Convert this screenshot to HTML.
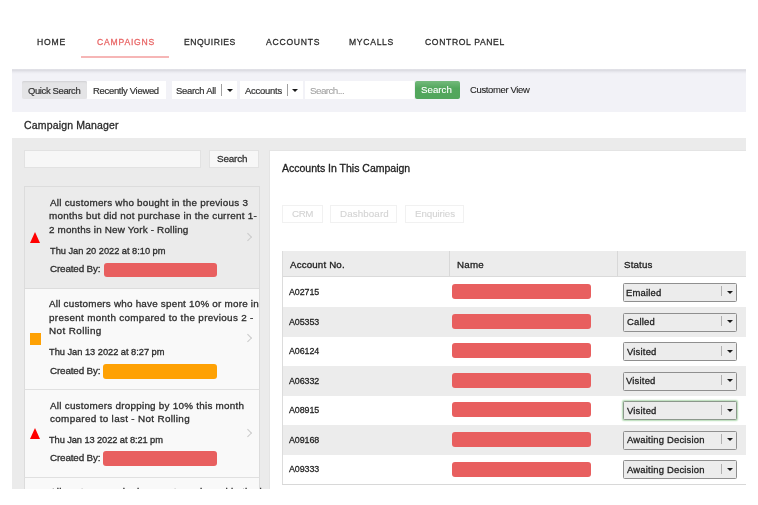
<!DOCTYPE html><html><head><meta charset="utf-8"><style>
*{margin:0;padding:0;box-sizing:border-box}
html,body{width:758px;height:505px;overflow:hidden;background:#fff;font-family:"Liberation Sans",sans-serif;color:#2b2b2b}
.a{position:absolute}
.t{position:absolute;white-space:nowrap;line-height:1;will-change:transform;font-family:"Liberation Sans",sans-serif}
.clip{position:absolute;left:0;top:0;width:758px;height:489px;overflow:hidden}
.sep{position:absolute;width:1px;background:#a0a0a0}
.arr{position:absolute;width:0;height:0;border-left:3px solid transparent;border-right:3px solid transparent;border-top:3.6px solid #1a1a1a}
.tri{position:absolute;width:0;height:0;border-left:5.6px solid transparent;border-right:5.6px solid transparent;border-bottom:11px solid #f00}
.chev{position:absolute;width:5.6px;height:5.6px;border-right:1.6px solid #cbcbcb;border-top:1.6px solid #cbcbcb;transform:rotate(45deg)}
.nm{position:absolute;width:139px;height:15px;background:#e85f5f;border-radius:3px}
.sel{position:absolute;left:623px;width:114px;height:19px;background:#ececec;border:1px solid #8f8f8f;border-radius:1.5px}
</style></head><body><div class="clip">
<div class="t" id="nav_home" style="left:36.50px;top:37.47px;font-size:8.60px;letter-spacing:0.833px;color:#2a2a2a;transform:scaleY(1.15);transform-origin:0 0;-webkit-text-stroke:0.25px #2a2a2a;">HOME</div>
<div class="t" id="nav_camp" style="left:96.60px;top:37.47px;font-size:8.60px;letter-spacing:0.800px;color:#e86565;transform:scaleY(1.15);transform-origin:0 0;-webkit-text-stroke:0.25px #e86565;">CAMPAIGNS</div>
<div class="t" id="nav_enq" style="left:183.70px;top:37.47px;font-size:8.60px;letter-spacing:0.500px;color:#2a2a2a;transform:scaleY(1.15);transform-origin:0 0;-webkit-text-stroke:0.25px #2a2a2a;">ENQUIRIES</div>
<div class="t" id="nav_acc" style="left:266.20px;top:37.47px;font-size:8.60px;letter-spacing:0.757px;color:#2a2a2a;transform:scaleY(1.15);transform-origin:0 0;-webkit-text-stroke:0.25px #2a2a2a;">ACCOUNTS</div>
<div class="t" id="nav_myc" style="left:349.40px;top:37.47px;font-size:8.60px;letter-spacing:0.700px;color:#2a2a2a;transform:scaleY(1.15);transform-origin:0 0;-webkit-text-stroke:0.25px #2a2a2a;">MYCALLS</div>
<div class="t" id="nav_cp" style="left:424.90px;top:37.47px;font-size:8.60px;letter-spacing:0.633px;color:#2a2a2a;transform:scaleY(1.15);transform-origin:0 0;-webkit-text-stroke:0.25px #2a2a2a;">CONTROL PANEL</div>
<div class="a" style="left:81px;top:56px;width:88px;height:2px;background:#f6b6b6"></div>
<div class="a" style="left:12px;top:69px;width:734px;height:42.5px;background:linear-gradient(#e2e2e8 0px,#dddde3 1.5px,#e9e9ef 3px,#f2f2f7 5px)"></div>
<div class="a" style="left:22px;top:81px;width:65px;height:18px;background:#e4e4e6;border-radius:2px;box-shadow:inset 0 2px 2px -1px #d0d0d3"></div>
<div class="a" style="left:87px;top:81px;width:78.5px;height:18px;background:#fff"></div>
<div class="a" style="left:172px;top:81px;width:65px;height:18px;background:#fff"></div>
<div class="sep" style="left:221px;top:84px;height:12px"></div><div class="arr" style="left:226.5px;top:89px"></div>
<div class="a" style="left:240px;top:81px;width:63px;height:18px;background:#fff"></div>
<div class="sep" style="left:286.5px;top:84px;height:12px"></div><div class="arr" style="left:292px;top:89px"></div>
<div class="a" style="left:305px;top:81px;width:108.5px;height:18px;background:#fff"></div>
<div class="a" style="left:415px;top:81px;width:45.3px;height:18.2px;background:linear-gradient(#74ba7c,#53a75d 40%,#52a65c);border-radius:2px"></div>
<div class="t" id="tb_qs" style="left:28.10px;top:85.78px;font-size:9.45px;letter-spacing:-0.364px;color:#333;-webkit-text-stroke:0.2px #333;">Quick Search</div>
<div class="t" id="tb_rv" style="left:93.10px;top:85.78px;font-size:9.45px;letter-spacing:-0.286px;color:#333;-webkit-text-stroke:0.2px #333;">Recently Viewed</div>
<div class="t" id="tb_sa" style="left:175.80px;top:85.78px;font-size:9.45px;letter-spacing:-0.267px;color:#333;-webkit-text-stroke:0.2px #333;">Search All</div>
<div class="t" id="tb_ac" style="left:244.50px;top:85.78px;font-size:9.45px;letter-spacing:-0.229px;color:#333;-webkit-text-stroke:0.2px #333;">Accounts</div>
<div class="t" id="tb_ph" style="left:310.20px;top:85.62px;font-size:9.88px;letter-spacing:-0.600px;color:#a3a3a3;-webkit-text-stroke:0.1px #a3a3a3;">Search...</div>
<div class="t" id="tb_go" style="left:421.30px;top:84.84px;font-size:9.74px;letter-spacing:0.000px;color:#ffffff;-webkit-text-stroke:0.1px #ffffff;">Search</div>
<div class="t" id="tb_cv" style="left:470.20px;top:84.78px;font-size:9.45px;letter-spacing:-0.333px;color:#222;-webkit-text-stroke:0.1px #222;">Customer View</div>
<div class="t" id="cm" style="left:24.10px;top:120.22px;font-size:10.50px;letter-spacing:0.160px;color:#2a2a2a;-webkit-text-stroke:0.3px #2a2a2a;">Campaign Manager</div>
<div class="a" style="left:12px;top:138px;width:734px;height:351px;background:#ebebeb"></div>
<div class="a" style="left:24px;top:150px;width:177px;height:18px;background:#f7f7f7;border:1px solid #e2e2e2"></div>
<div class="a" style="left:209px;top:150px;width:50px;height:18px;background:#f7f7f7;border:1px solid #e2e2e2"></div>
<div class="t" id="ls_btn" style="left:217.40px;top:154.22px;font-size:9.88px;letter-spacing:-0.160px;color:#333;-webkit-text-stroke:0.3px #333;">Search</div>
<div class="a" style="left:24px;top:186px;width:236px;height:103px;background:#ebebeb;border:1px solid #dcdcdc"></div>
<div class="a" style="left:24px;top:289px;width:236px;height:101px;background:#f9f9f9;border-left:1px solid #dcdcdc;border-right:1px solid #dcdcdc;border-bottom:1px solid #e0e0e0"></div>
<div class="a" style="left:24px;top:390px;width:236px;height:88px;background:#f9f9f9;border-left:1px solid #dcdcdc;border-right:1px solid #dcdcdc;border-bottom:1px solid #e0e0e0"></div>
<div class="a" style="left:24px;top:478px;width:236px;height:30px;background:#f9f9f9;border-left:1px solid #dcdcdc;border-right:1px solid #dcdcdc"></div>
<div class="t" id="c1_l1" style="left:50.20px;top:197.62px;font-size:9.88px;letter-spacing:0.234px;color:#2d2d2d;-webkit-text-stroke:0.3px #2d2d2d;">All customers who bought in the previous 3</div>
<div class="t" id="c1_l2" style="left:49.40px;top:211.37px;font-size:9.88px;letter-spacing:0.255px;color:#2d2d2d;-webkit-text-stroke:0.3px #2d2d2d;">months but did not purchase in the current 1-</div>
<div class="t" id="c1_l3" style="left:49.40px;top:225.12px;font-size:9.88px;letter-spacing:0.166px;color:#2d2d2d;-webkit-text-stroke:0.3px #2d2d2d;">2 months in New York - Rolling</div>
<div class="t" id="c1_date" style="left:50.40px;top:246.52px;font-size:9.30px;letter-spacing:-0.032px;color:#2d2d2d;transform:scaleY(1.07);transform-origin:0 0;-webkit-text-stroke:0.3px #2d2d2d;">Thu Jan 20 2022 at 8:10 pm</div>
<div class="t" id="c1_by" style="left:50.40px;top:264.32px;font-size:9.88px;letter-spacing:-0.160px;color:#2d2d2d;-webkit-text-stroke:0.3px #2d2d2d;">Created By:</div>
<div class="t" id="c2_l1" style="left:49.40px;top:299.02px;font-size:9.88px;letter-spacing:0.210px;color:#2d2d2d;-webkit-text-stroke:0.3px #2d2d2d;">All customers who have spent 10% or more in</div>
<div class="t" id="c2_l2" style="left:49.40px;top:312.62px;font-size:9.88px;letter-spacing:0.312px;color:#2d2d2d;-webkit-text-stroke:0.3px #2d2d2d;">present month compared to the previous 2 -</div>
<div class="t" id="c2_l3" style="left:49.40px;top:326.32px;font-size:9.88px;letter-spacing:0.400px;color:#2d2d2d;-webkit-text-stroke:0.3px #2d2d2d;">Not Rolling</div>
<div class="t" id="c2_date" style="left:48.80px;top:348.12px;font-size:9.30px;letter-spacing:-0.032px;color:#2d2d2d;transform:scaleY(1.07);transform-origin:0 0;-webkit-text-stroke:0.3px #2d2d2d;">Thu Jan 13 2022 at 8:27 pm</div>
<div class="t" id="c2_by" style="left:50.40px;top:365.52px;font-size:9.88px;letter-spacing:-0.160px;color:#2d2d2d;-webkit-text-stroke:0.3px #2d2d2d;">Created By:</div>
<div class="t" id="c3_l1" style="left:50.20px;top:400.72px;font-size:9.88px;letter-spacing:0.246px;color:#2d2d2d;-webkit-text-stroke:0.3px #2d2d2d;">All customers dropping by 10% this month</div>
<div class="t" id="c3_l2" style="left:50.20px;top:414.22px;font-size:9.88px;letter-spacing:0.331px;color:#2d2d2d;-webkit-text-stroke:0.3px #2d2d2d;">compared to last - Not Rolling</div>
<div class="t" id="c3_date" style="left:48.80px;top:436.02px;font-size:9.30px;letter-spacing:-0.096px;color:#2d2d2d;transform:scaleY(1.07);transform-origin:0 0;-webkit-text-stroke:0.3px #2d2d2d;">Thu Jan 13 2022 at 8:21 pm</div>
<div class="t" id="c3_by" style="left:50.40px;top:453.42px;font-size:9.88px;letter-spacing:-0.160px;color:#2d2d2d;-webkit-text-stroke:0.3px #2d2d2d;">Created By:</div>
<div class="t" id="c4_l1" style="left:50.20px;top:486.52px;font-size:9.88px;letter-spacing:0.234px;color:#2d2d2d;-webkit-text-stroke:0.3px #2d2d2d;">All customers who have not purchased in the last</div>
<div class="tri" style="left:29.5px;top:232.3px"></div>
<div class="a" style="left:29.5px;top:333.4px;width:11.4px;height:11.2px;background:#fea104"></div>
<div class="tri" style="left:29.5px;top:428.1px"></div>
<div class="chev" style="left:244.8px;top:234.2px"></div>
<div class="chev" style="left:244.8px;top:335.3px"></div>
<div class="chev" style="left:244.8px;top:429.6px"></div>
<div class="a" style="left:103.5px;top:262.5px;width:113.7px;height:14.8px;background:#e85f5f;border-radius:3px"></div>
<div class="a" style="left:103.2px;top:363.6px;width:114px;height:15px;background:#fea104;border-radius:3px"></div>
<div class="a" style="left:103.2px;top:451px;width:114px;height:14.6px;background:#e85f5f;border-radius:3px"></div>
<div class="a" style="left:269px;top:150px;width:477px;height:339px;background:#fff;border-top:1px solid #e4e4e4;border-left:1px solid #e4e4e4"></div>
<div class="t" id="rp_title" style="left:281.90px;top:162.81px;font-size:10.50px;letter-spacing:0.000px;color:#222;-webkit-text-stroke:0.3px #222;">Accounts In This Campaign</div>
<div class="a" style="left:281.8px;top:204.5px;width:40.8px;height:18.3px;border:1px solid #f1f1f1"></div>
<div class="a" style="left:330.1px;top:204.5px;width:66.9px;height:18.3px;border:1px solid #f1f1f1"></div>
<div class="a" style="left:405px;top:204.5px;width:59.0px;height:18.3px;border:1px solid #f1f1f1"></div>
<div class="t" id="b_crm" style="left:291.90px;top:209.43px;font-size:9.81px;letter-spacing:-0.400px;color:#d3d3d3;-webkit-text-stroke:0.1px #d3d3d3;">CRM</div>
<div class="t" id="b_dash" style="left:339.60px;top:209.43px;font-size:9.81px;letter-spacing:0.100px;color:#d3d3d3;-webkit-text-stroke:0.1px #d3d3d3;">Dashboard</div>
<div class="t" id="b_enq" style="left:414.70px;top:209.43px;font-size:9.81px;letter-spacing:-0.100px;color:#d3d3d3;-webkit-text-stroke:0.1px #d3d3d3;">Enquiries</div>
<div class="a" style="left:281.5px;top:251px;width:464.5px;height:26.5px;background:#ececec;border-left:1px solid #dcdcdc;border-bottom:2px solid #dadada"></div>
<div class="a" style="left:449.3px;top:251px;width:1px;height:24.5px;background:#d8d8d8"></div>
<div class="a" style="left:616.7px;top:251px;width:1px;height:24.5px;background:#d8d8d8"></div>
<div class="t" id="th_acc" style="left:290.20px;top:259.54px;font-size:9.74px;letter-spacing:0.160px;color:#222;-webkit-text-stroke:0.3px #222;">Account No.</div>
<div class="t" id="th_name" style="left:457.40px;top:259.54px;font-size:9.74px;letter-spacing:0.267px;color:#222;-webkit-text-stroke:0.3px #222;">Name</div>
<div class="t" id="th_status" style="left:624.40px;top:259.54px;font-size:9.74px;letter-spacing:0.160px;color:#222;-webkit-text-stroke:0.3px #222;">Status</div>
<div class="a" style="left:281.5px;top:277.40px;width:464.5px;height:29.57px;background:#fff;border-left:1px solid #dcdcdc"></div>
<div class="nm" style="left:452px;top:284.20px"></div>
<div class="sel" style="top:283.00px;"></div>
<div class="sep" style="left:721px;top:286.40px;height:10px;background:#b0b0b0"></div>
<div class="arr" style="left:726.7px;top:290.60px;border-left-width:3.2px;border-right-width:3.2px;border-top-width:3.6px"></div>
<div class="t" id="r0_acc" style="left:288.70px;top:286.50px;font-size:8.90px;letter-spacing:-0.080px;color:#222;transform:scaleY(1.12);transform-origin:0 0;-webkit-text-stroke:0.25px #222;">A02715</div>
<div class="t" id="r0_st" style="left:625.70px;top:287.98px;font-size:9.45px;letter-spacing:0.200px;color:#222;-webkit-text-stroke:0.3px #222;">Emailed</div>
<div class="a" style="left:281.5px;top:306.97px;width:464.5px;height:29.57px;background:#ececec;border-left:1px solid #dcdcdc"></div>
<div class="nm" style="left:452px;top:313.77px"></div>
<div class="sel" style="top:312.57px;"></div>
<div class="sep" style="left:721px;top:315.97px;height:10px;background:#b0b0b0"></div>
<div class="arr" style="left:726.7px;top:320.17px;border-left-width:3.2px;border-right-width:3.2px;border-top-width:3.6px"></div>
<div class="t" id="r1_acc" style="left:288.70px;top:316.80px;font-size:8.90px;letter-spacing:-0.080px;color:#222;transform:scaleY(1.12);transform-origin:0 0;-webkit-text-stroke:0.25px #222;">A05353</div>
<div class="t" id="r1_st" style="left:626.50px;top:317.48px;font-size:9.45px;letter-spacing:0.200px;color:#222;-webkit-text-stroke:0.3px #222;">Called</div>
<div class="a" style="left:281.5px;top:336.54px;width:464.5px;height:29.57px;background:#fff;border-left:1px solid #dcdcdc"></div>
<div class="nm" style="left:452px;top:343.34px"></div>
<div class="sel" style="top:342.14px;"></div>
<div class="sep" style="left:721px;top:345.54px;height:10px;background:#b0b0b0"></div>
<div class="arr" style="left:726.7px;top:349.74px;border-left-width:3.2px;border-right-width:3.2px;border-top-width:3.6px"></div>
<div class="t" id="r2_acc" style="left:288.70px;top:345.50px;font-size:8.90px;letter-spacing:-0.080px;color:#222;transform:scaleY(1.12);transform-origin:0 0;-webkit-text-stroke:0.25px #222;">A06124</div>
<div class="t" id="r2_st" style="left:626.50px;top:346.98px;font-size:9.45px;letter-spacing:0.200px;color:#222;-webkit-text-stroke:0.3px #222;">Visited</div>
<div class="a" style="left:281.5px;top:366.11px;width:464.5px;height:29.57px;background:#ececec;border-left:1px solid #dcdcdc"></div>
<div class="nm" style="left:452px;top:372.91px"></div>
<div class="sel" style="top:371.71px;"></div>
<div class="sep" style="left:721px;top:375.11px;height:10px;background:#b0b0b0"></div>
<div class="arr" style="left:726.7px;top:379.31px;border-left-width:3.2px;border-right-width:3.2px;border-top-width:3.6px"></div>
<div class="t" id="r3_acc" style="left:288.70px;top:375.80px;font-size:8.90px;letter-spacing:-0.080px;color:#222;transform:scaleY(1.12);transform-origin:0 0;-webkit-text-stroke:0.25px #222;">A06332</div>
<div class="t" id="r3_st" style="left:625.70px;top:376.48px;font-size:9.45px;letter-spacing:0.200px;color:#222;-webkit-text-stroke:0.3px #222;">Visited</div>
<div class="a" style="left:281.5px;top:395.68px;width:464.5px;height:29.57px;background:#fff;border-left:1px solid #dcdcdc"></div>
<div class="nm" style="left:452px;top:402.48px"></div>
<div class="sel" style="top:401.28px;border-color:#8c988c;box-shadow:0 0 1.5px 0.6px #b5dcb5;"></div>
<div class="sep" style="left:721px;top:404.68px;height:10px;background:#b0b0b0"></div>
<div class="arr" style="left:726.7px;top:408.88px;border-left-width:3.2px;border-right-width:3.2px;border-top-width:3.6px"></div>
<div class="t" id="r4_acc" style="left:288.70px;top:404.50px;font-size:8.90px;letter-spacing:-0.080px;color:#222;transform:scaleY(1.12);transform-origin:0 0;-webkit-text-stroke:0.25px #222;">A08915</div>
<div class="t" id="r4_st" style="left:626.50px;top:405.98px;font-size:9.45px;letter-spacing:0.200px;color:#222;-webkit-text-stroke:0.3px #222;">Visited</div>
<div class="a" style="left:281.5px;top:425.25px;width:464.5px;height:29.57px;background:#ececec;border-left:1px solid #dcdcdc"></div>
<div class="nm" style="left:452px;top:432.05px"></div>
<div class="sel" style="top:430.85px;"></div>
<div class="sep" style="left:721px;top:434.25px;height:10px;background:#b0b0b0"></div>
<div class="arr" style="left:726.7px;top:438.45px;border-left-width:3.2px;border-right-width:3.2px;border-top-width:3.6px"></div>
<div class="t" id="r5_acc" style="left:288.70px;top:434.80px;font-size:8.90px;letter-spacing:-0.080px;color:#222;transform:scaleY(1.12);transform-origin:0 0;-webkit-text-stroke:0.25px #222;">A09168</div>
<div class="t" id="r5_st" style="left:626.50px;top:435.48px;font-size:9.45px;letter-spacing:0.200px;color:#222;-webkit-text-stroke:0.3px #222;">Awaiting Decision</div>
<div class="a" style="left:281.5px;top:454.82px;width:464.5px;height:29.57px;background:#fff;border-left:1px solid #dcdcdc"></div>
<div class="nm" style="left:452px;top:461.62px"></div>
<div class="sel" style="top:460.42px;"></div>
<div class="sep" style="left:721px;top:463.82px;height:10px;background:#b0b0b0"></div>
<div class="arr" style="left:726.7px;top:468.02px;border-left-width:3.2px;border-right-width:3.2px;border-top-width:3.6px"></div>
<div class="t" id="r6_acc" style="left:288.70px;top:463.50px;font-size:8.90px;letter-spacing:-0.080px;color:#222;transform:scaleY(1.12);transform-origin:0 0;-webkit-text-stroke:0.25px #222;">A09333</div>
<div class="t" id="r6_st" style="left:626.50px;top:464.98px;font-size:9.45px;letter-spacing:0.200px;color:#222;-webkit-text-stroke:0.3px #222;">Awaiting Decision</div>
<div class="a" style="left:281.5px;top:484px;width:464.5px;height:1px;background:#d8d8d8"></div>
</div></body></html>
